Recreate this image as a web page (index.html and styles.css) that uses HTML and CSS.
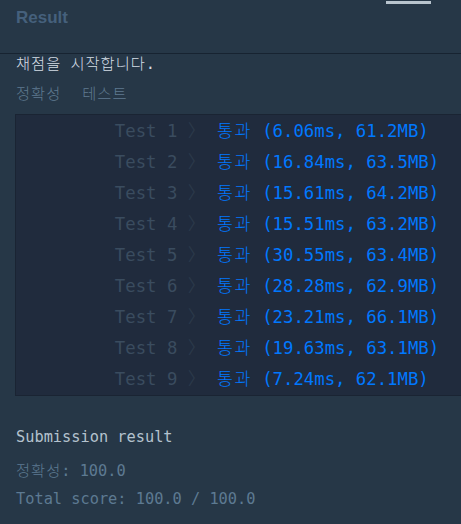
FILE: index.html
```html
<!DOCTYPE html>
<html lang="ko">
<head>
<meta charset="utf-8">
<title>Result</title>
<link rel="stylesheet" href="styles.css">
</head>
<body>
<div class="panel">
  <div class="header">
    <h2 class="title">Result</h2>
    <span class="handle"></span>
  </div>
  <div class="output">
    <p class="msg"><span class="ko">채점을</span> <span class="ko">시작합니다</span>.</p>
    <div class="tabs"><span class="ko">정확성</span><span class="ko">테스트</span></div>
    <div class="box">
      <div class="row"><span class="label">Test 1 <i class="chev">〉</i></span><span class="pass"><span class="ko">통과</span> (6.06ms, 61.2MB)</span></div>
      <div class="row"><span class="label">Test 2 <i class="chev">〉</i></span><span class="pass"><span class="ko">통과</span> (16.84ms, 63.5MB)</span></div>
      <div class="row"><span class="label">Test 3 <i class="chev">〉</i></span><span class="pass"><span class="ko">통과</span> (15.61ms, 64.2MB)</span></div>
      <div class="row"><span class="label">Test 4 <i class="chev">〉</i></span><span class="pass"><span class="ko">통과</span> (15.51ms, 63.2MB)</span></div>
      <div class="row"><span class="label">Test 5 <i class="chev">〉</i></span><span class="pass"><span class="ko">통과</span> (30.55ms, 63.4MB)</span></div>
      <div class="row"><span class="label">Test 6 <i class="chev">〉</i></span><span class="pass"><span class="ko">통과</span> (28.28ms, 62.9MB)</span></div>
      <div class="row"><span class="label">Test 7 <i class="chev">〉</i></span><span class="pass"><span class="ko">통과</span> (23.21ms, 66.1MB)</span></div>
      <div class="row"><span class="label">Test 8 <i class="chev">〉</i></span><span class="pass"><span class="ko">통과</span> (19.63ms, 63.1MB)</span></div>
      <div class="row"><span class="label">Test 9 <i class="chev">〉</i></span><span class="pass"><span class="ko">통과</span> (7.24ms, 62.1MB)</span></div>
    </div>
    <p class="sub-title">Submission result</p>
    <p class="score"><span class="ko">정확성</span>: 100.0</p>
    <p class="score total">Total score: 100.0 / 100.0</p>
  </div>
</div>
</body>
</html>
```

FILE: styles.css
```css
html, body {
  margin: 0;
  padding: 0;
  background: #263747;
}
.panel {
  width: 461px;
  height: 524px;
  overflow: hidden;
  background: #263747;
}
.header {
  position: relative;
  height: 53px;
  border-bottom: 1px solid #172331;
  padding-left: 16px;
  display: flex;
  align-items: center;
}
.title {
  margin: 0 0 17px 0;
  font-family: "Liberation Sans", Arial, sans-serif;
  font-weight: bold;
  font-size: 17px;
  color: #45607c;
}
.handle {
  position: absolute;
  left: 386px;
  top: 1px;
  width: 45px;
  height: 3px;
  background: #b8c4ce;
}
.output {
  padding-left: 15px;
  font-family: "DejaVu Sans Mono", "Noto Sans CJK KR", monospace;
  font-size: 15.3px;
}
.ko {
  font-family: "Noto Sans CJK KR", sans-serif;
  font-weight: 300;
  letter-spacing: 1px;
  line-height: 1;
}
.msg {
  margin: 0;
  height: 20px;
  line-height: 20px;
  color: #d5dee6;
  padding-left: 1px;
}
.tabs {
  margin-top: 11px;
  margin-bottom: 9px;
  height: 20px;
  line-height: 20px;
  display: flex;
  gap: 21px;
  padding-left: 1px;
  color: #5f7a90;
}
.box {
  background: #202b3d;
  border: 1px solid #1a2433;
  margin-right: -2px;
  font-size: 17.3px;
}
.row {
  display: flex;
  align-items: center;
  height: 31.1px;
}
.label {
  width: 189px;
  text-align: right;
  color: #3a4c5f;
  white-space: pre;
}
.chev {
  font-style: normal;
  color: #2b394a;
  font-family: "Noto Sans CJK KR", sans-serif;
  line-height: 1;
}
.pass {
  margin-left: 12px;
  color: #0078ff;
  white-space: pre;
}
.pass .ko {
  letter-spacing: 1.5px;
}
.sub-title {
  margin: 31px 0 0 0;
  padding-left: 1px;
  height: 20px;
  line-height: 20px;
  color: #b4c2ce;
}
.score {
  margin: 14px 0 0 0;
  padding-left: 1px;
  height: 20px;
  line-height: 20px;
  color: #5d7a92;
}
.score.total {
  margin-top: 8px;
}
```
